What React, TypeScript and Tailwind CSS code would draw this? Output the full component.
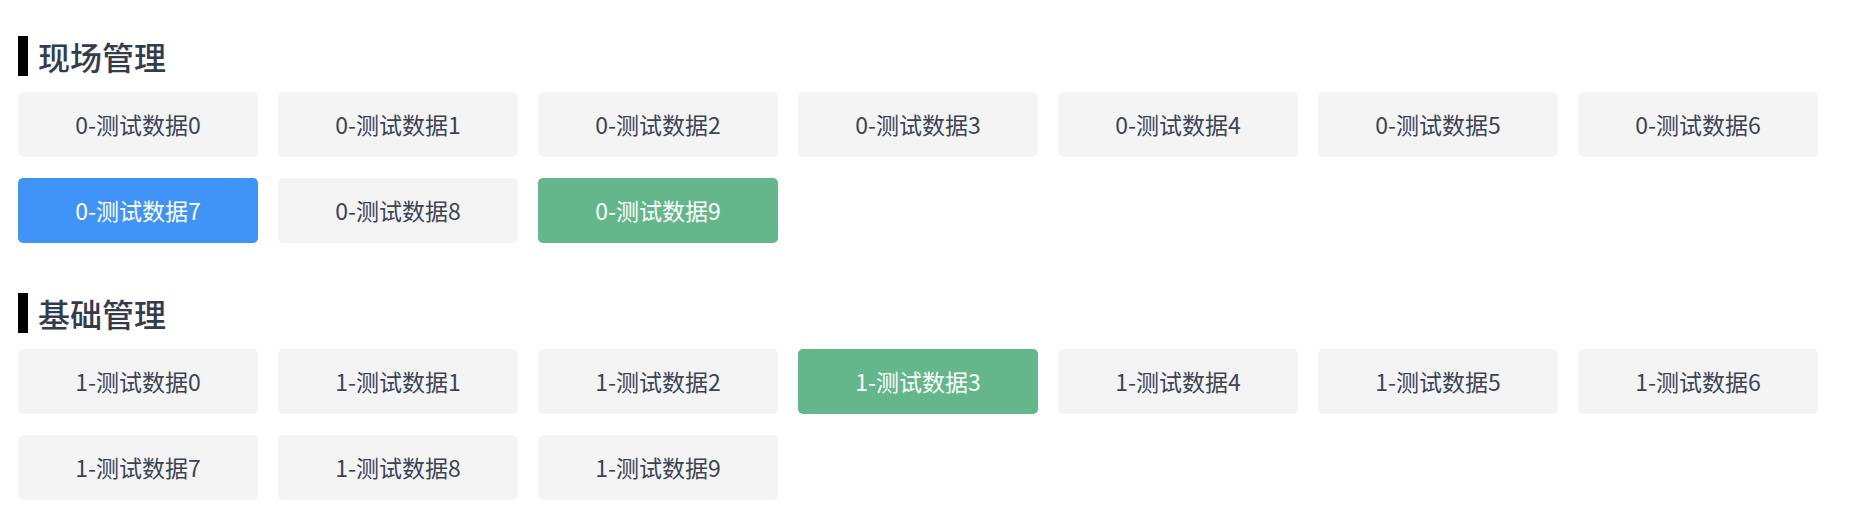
import React from "react";

type Item = { label: string; tone: "gray" | "blue" | "green" };

const toneClass: Record<Item["tone"], string> = {
  gray: "bg-[#f4f4f5] text-[#3a4456]",
  blue: "bg-[#4094f7] text-white",
  green: "bg-[#64b78a] text-white",
};

function Section({ title, items }: { title: string; items: Item[] }) {
  return (
    <section>
      <div className="flex items-center h-[40px] mb-[16px]">
        <div className="w-[10px] h-[40px] bg-black" />
        <h2 className="ml-[10px] text-[32px] leading-[40px] font-medium text-[#323c4d]">{title}</h2>
      </div>
      <div className="grid grid-cols-[repeat(7,240px)] gap-x-[20px] gap-y-[21px]">
        {items.map((it) => (
          <div
            key={it.label}
            className={`h-[65px] rounded-[5px] flex items-center justify-center text-[23px] ${toneClass[it.tone]}`}
          >
            {it.label}
          </div>
        ))}
      </div>
    </section>
  );
}

export default function App() {
  const s0: Item[] = Array.from({ length: 10 }, (_, i) => ({
    label: `0-测试数据${i}`,
    tone: i === 7 ? "blue" : i === 9 ? "green" : "gray",
  }));
  const s1: Item[] = Array.from({ length: 10 }, (_, i) => ({
    label: `1-测试数据${i}`,
    tone: i === 3 ? "green" : "gray",
  }));
  return (
    <div
      className="w-[1876px] h-[518px] bg-white pl-[18px] pt-[36px] flex flex-col gap-[50px]"
      style={{ fontFamily: '"Noto Sans CJK SC", "Noto Sans", sans-serif' }}
    >
      <Section title="现场管理" items={s0} />
      <Section title="基础管理" items={s1} />
    </div>
  );
}
